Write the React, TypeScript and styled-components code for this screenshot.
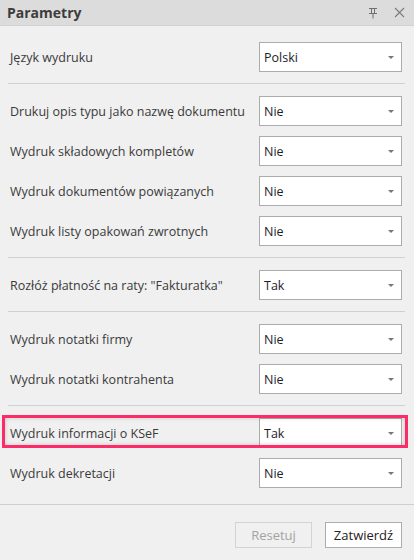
import styled, { createGlobalStyle } from 'styled-components';

const GlobalStyle = createGlobalStyle`
  html, body {
    margin: 0;
    padding: 0;
    background: #f0f0f0;
  }
  body {
    font-family: "Open Sans", "Noto Sans", "Liberation Sans", sans-serif;
    font-size: 12.5px;
    color: #333;
  }
`;

type Option = { label: string; value: string; highlighted?: boolean };

const groups: Option[][] = [
  [{ label: 'Język wydruku', value: 'Polski' }],
  [
    { label: 'Drukuj opis typu jako nazwę dokumentu', value: 'Nie' },
    { label: 'Wydruk składowych kompletów', value: 'Nie' },
    { label: 'Wydruk dokumentów powiązanych', value: 'Nie' },
    { label: 'Wydruk listy opakowań zwrotnych', value: 'Nie' },
  ],
  [{ label: 'Rozłóż płatność na raty: "Fakturatka"', value: 'Tak' }],
  [
    { label: 'Wydruk notatki firmy', value: 'Nie' },
    { label: 'Wydruk notatki kontrahenta', value: 'Nie' },
  ],
  [
    { label: 'Wydruk informacji o KSeF', value: 'Tak', highlighted: true },
    { label: 'Wydruk dekretacji', value: 'Nie' },
  ],
];

function PinIcon() {
  return (
    <svg width="10" height="12" viewBox="0 0 10 12" fill="none" stroke="#6f6f6f" strokeWidth="1">
      <path d="M1 1.5h8" />
      <path d="M3.5 1.5v5M6.5 1.5v5" />
      <path d="M1 6.5h8" />
      <path d="M5 6.5v5" />
    </svg>
  );
}

function CloseIcon() {
  return (
    <svg width="11" height="11" viewBox="0 0 11 11" stroke="#7a7a7a" strokeWidth="1.1">
      <path d="M1 1l9 9M10 1l-9 9" />
    </svg>
  );
}

function Caret() {
  return (
    <svg width="6" height="3" viewBox="0 0 6 3">
      <path d="M0 0h6L3 3z" fill="#777" />
    </svg>
  );
}

export default function App() {
  return (
    <>
      <GlobalStyle />
      <Panel>
        <Header>
          <Title>Parametry</Title>
          <HeaderTools>
            <ToolButton>
              <PinIcon />
            </ToolButton>
            <ToolButton>
              <CloseIcon />
            </ToolButton>
          </HeaderTools>
        </Header>
        <Body>
          {groups.map((group, gi) => (
            <Group key={gi} $last={gi === groups.length - 1}>
              {group.map((opt) => (
                <Row key={opt.label} $highlighted={opt.highlighted}>
                  <Label>{opt.label}</Label>
                  <Select>
                    <span>{opt.value}</span>
                    <Caret />
                  </Select>
                </Row>
              ))}
            </Group>
          ))}
        </Body>
        <Footer>
          <Button disabled>Resetuj</Button>
          <Button>Zatwierdź</Button>
        </Footer>
      </Panel>
    </>
  );
}

const Panel = styled.div`
  width: 414px;
  height: 560px;
  display: flex;
  flex-direction: column;
  background: #f0f0f0;
  overflow: hidden;
`;

const Header = styled.div`
  height: 25px;
  flex: none;
  display: flex;
  align-items: center;
  justify-content: space-between;
  padding: 0 8px 0 7px;
  background: #dcdcdc;
  border-bottom: 1px solid #d2d2d2;
`;

const Title = styled.div`
  font-size: 14px;
  font-weight: 700;
  color: #3c3c3c;
`;

const HeaderTools = styled.div`
  display: flex;
  align-items: center;
  gap: 14px;
`;

const ToolButton = styled.span`
  display: flex;
  align-items: center;
  justify-content: center;
  width: 13px;
  height: 14px;
`;

const Body = styled.div`
  flex: 1;
  padding: 4px 9px 0 8px;
`;

const Group = styled.div<{ $last?: boolean }>`
  display: flex;
  flex-direction: column;
  gap: 10px;
  padding: 12px 0 ${(p) => (p.$last ? '16px' : '11px')};
  border-bottom: ${(p) => (p.$last ? 'none' : '1px solid #d0d0d0')};
`;

const Row = styled.div<{ $highlighted?: boolean }>`
  position: relative;
  height: 30px;
  display: flex;
  align-items: center;
  justify-content: space-between;
  padding-left: 2px;
  margin-right: 3px;

  ${(p) =>
    p.$highlighted &&
    `
    &::after {
      content: '';
      position: absolute;
      inset: -3px -6px 0 -6px;
      border: 3px solid #fe2b69;
      box-shadow: inset 0 0 4px rgba(0, 0, 0, 0.18);
      pointer-events: none;
    }
  `}
`;

const Label = styled.span`
  color: #3a3a3a;
  white-space: nowrap;
`;

const Select = styled.div`
  width: 143px;
  height: 30px;
  box-sizing: border-box;
  display: flex;
  align-items: center;
  justify-content: space-between;
  padding: 0 7px 0 4px;
  background: #fff;
  border: 1px solid #acacac;
  color: #1c1c2a;
`;

const Footer = styled.div`
  flex: none;
  display: flex;
  justify-content: flex-end;
  gap: 13px;
  padding: 17px 12px 12px;
  border-top: 1px solid #cfcfcf;
`;

const Button = styled.button`
  width: 77px;
  height: 26px;
  font-family: inherit;
  font-size: 13px;
  background: #fff;
  color: #222;
  border: 1px solid #adadad;
  padding: 0;

  &:disabled {
    background: #f0f0f0;
    color: #a3a3a3;
    border-color: #d3d3d3;
  }
`;
